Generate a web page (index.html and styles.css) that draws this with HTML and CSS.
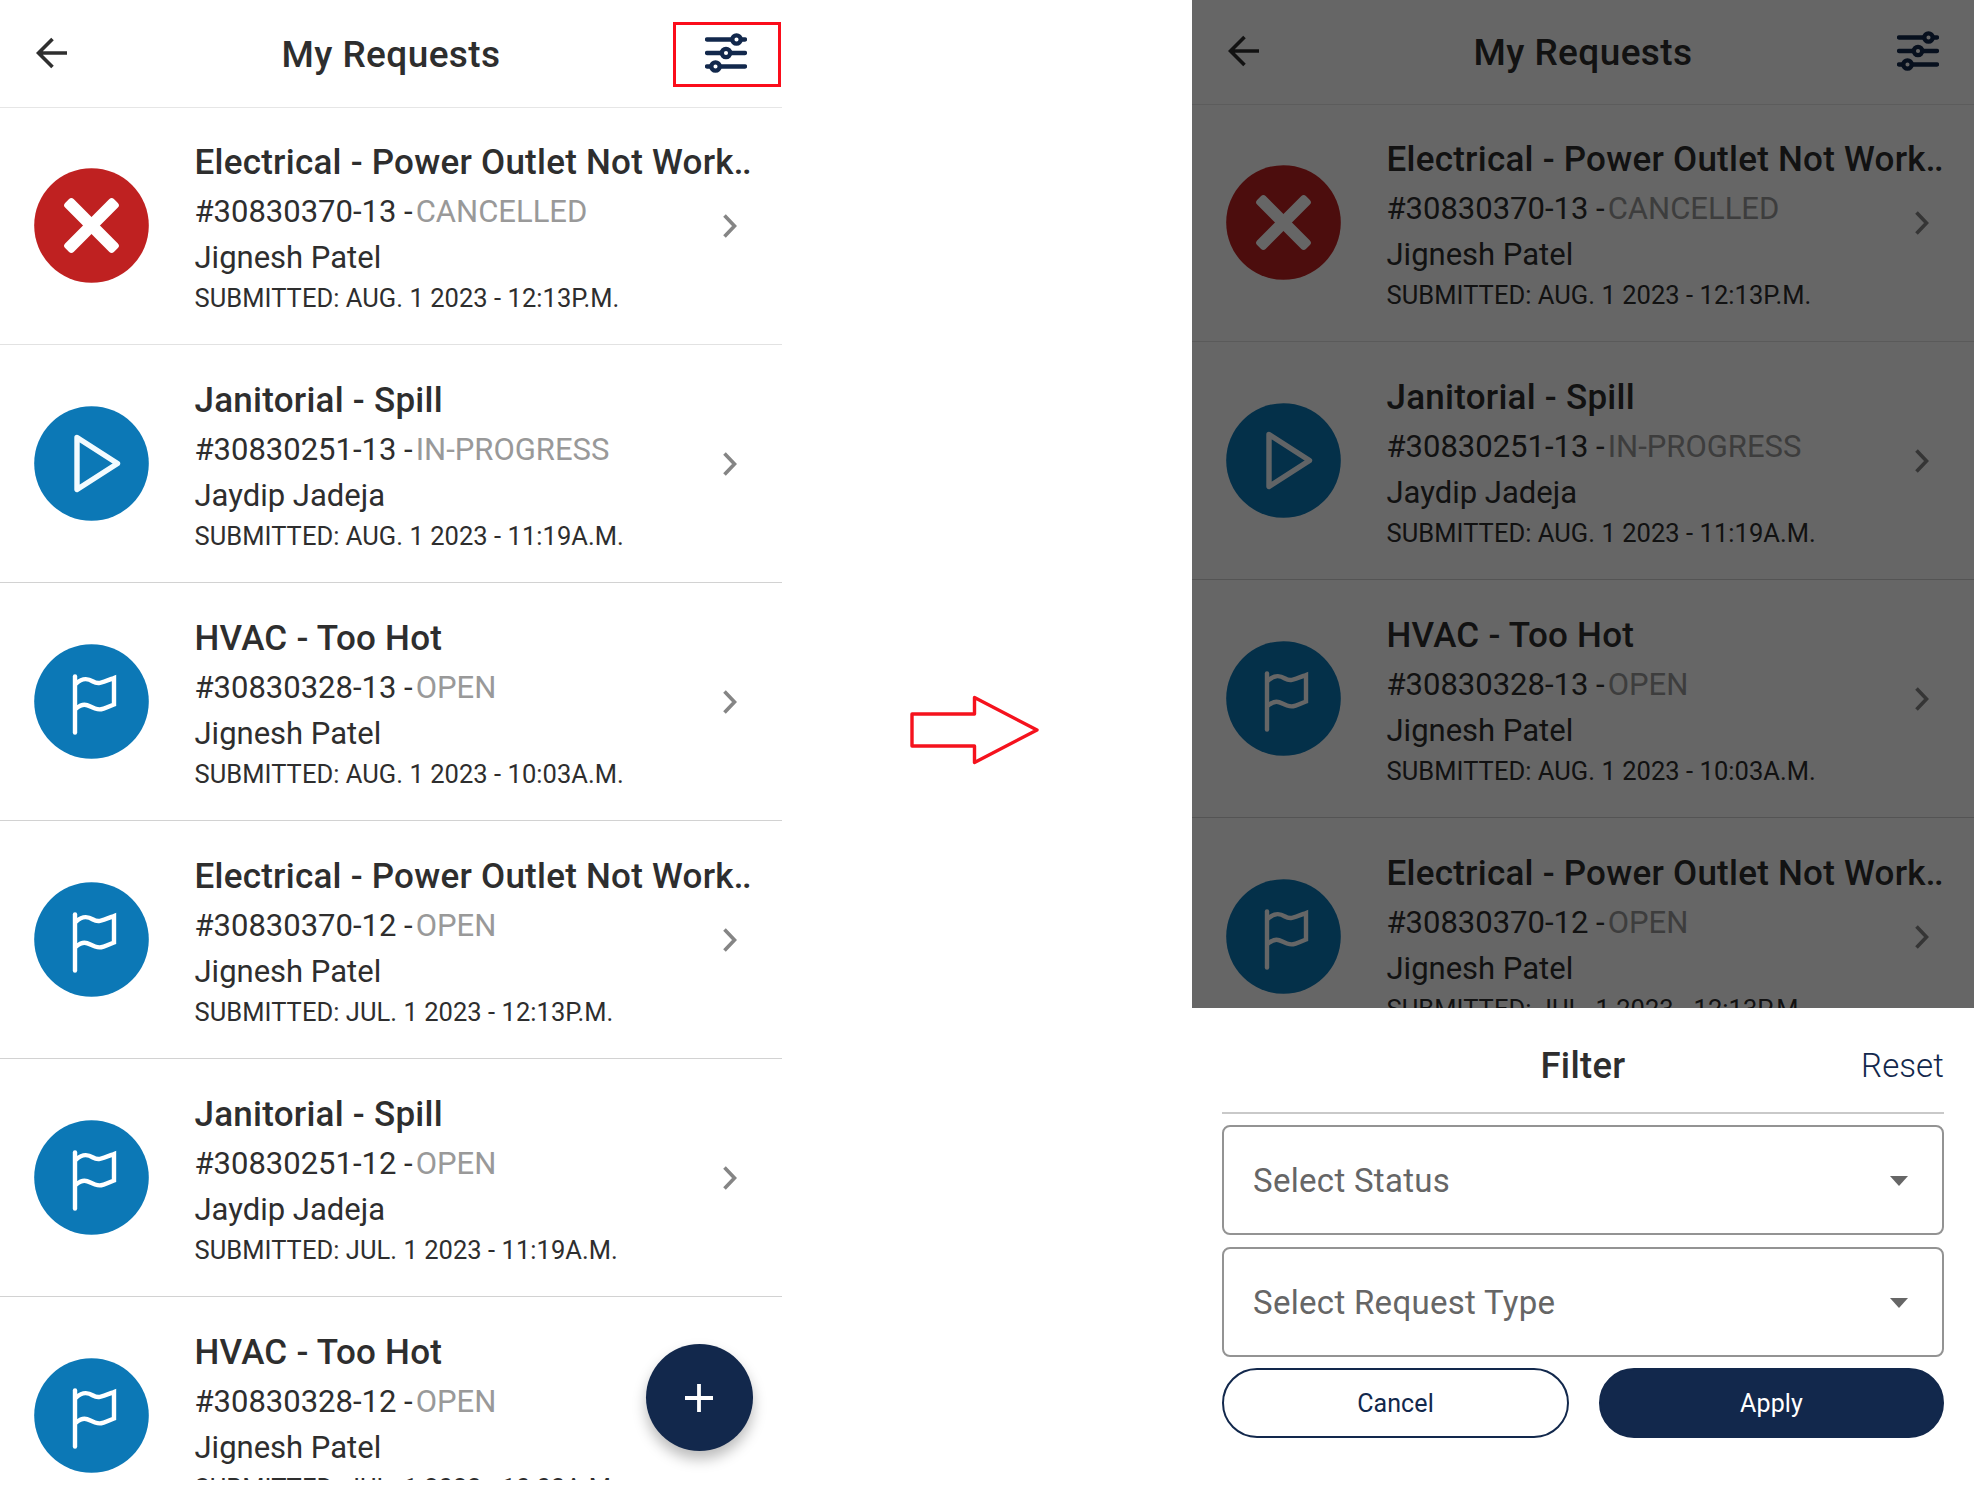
FILE: index.html
```html
<!DOCTYPE html>
<html lang="en">
<head>
<meta charset="utf-8">
<title>My Requests</title>
<link rel="stylesheet" href="styles.css">
</head>
<body>
<svg class="sprite" aria-hidden="true">
  <symbol id="back" viewBox="0 0 32 32"><path d="M31 16H3M16.500 2L2.500 16L16.500 30" fill="none" stroke="#2f2f2f" stroke-width="3.600"/></symbol>
  <symbol id="sliders" viewBox="0 0 42 42">
    <g fill="none" stroke="#12284c" stroke-width="4.300" stroke-linecap="round"><path d="M2 7.500H27M37 7.500H40M2 21H16M26 21H40M2 34.500H6M16 34.500H40"/><circle cx="31.500" cy="7.500" r="4.200"/><circle cx="21" cy="21" r="4.200"/><circle cx="10.500" cy="34.500" r="4.200"/></g>
  </symbol>
  <symbol id="chevron" viewBox="0 0 14 24"><path d="M1.500 1.500L11.500 12L1.500 22.500" fill="none" stroke="#858585" stroke-width="3.600"/></symbol>
  <symbol id="cancelled" viewBox="0 0 115 115"><circle cx="57.500" cy="57.500" r="57.300" fill="#bf2121"/><g fill="#fff" transform="rotate(45 57.500 57.500)"><rect x="23" y="51.500" width="69" height="12" rx="3.200"/><rect x="51.500" y="23" width="12" height="69" rx="3.200"/></g></symbol>
  <symbol id="progress" viewBox="0 0 115 115"><circle cx="57.500" cy="57.500" r="57.300" fill="#0c78b6"/><path d="M43 31.500L83.500 57.500L43 83.500Z" fill="none" stroke="#f3fbff" stroke-width="5.400" stroke-linejoin="round"/></symbol>
  <symbol id="open" viewBox="0 0 115 115"><circle cx="57.500" cy="57.500" r="57.300" fill="#0c78b6"/><g fill="none" stroke="#fff" stroke-width="4.400" stroke-linecap="round"><path d="M41 32.500V88.500"/><path d="M42 39.500C49 33.500 54 34.500 59 37.500S67 39 80 34V60.500C70 64 68 67 61 64.500S51 57.500 42 64.500"/></g></symbol>
</svg>

<main class="board">
  <section class="phone">
    <header class="bar">
      <svg class="back"><use href="#back"/></svg>
      <h1 class="heading">My Requests</h1>
      <div class="filter-button marked"><svg class="sliders"><use href="#sliders"/></svg></div>
    </header>
    <article class="request"><svg class="status"><use href="#cancelled"/></svg><div class="info"><h2 class="title">Electrical - Power Outlet Not Work<span class="dots">..</span></h2><p class="line">#30830370-13 -<span class="state">CANCELLED</span></p><p class="line name">Jignesh Patel</p><p class="date">SUBMITTED: AUG. 1 2023 - 12:13P.M.</p></div><svg class="chevron"><use href="#chevron"/></svg></article>
    <article class="request"><svg class="status"><use href="#progress"/></svg><div class="info"><h2 class="title">Janitorial - Spill</h2><p class="line">#30830251-13 -<span class="state">IN-PROGRESS</span></p><p class="line name">Jaydip Jadeja</p><p class="date">SUBMITTED: AUG. 1 2023 - 11:19A.M.</p></div><svg class="chevron"><use href="#chevron"/></svg></article>
    <article class="request"><svg class="status"><use href="#open"/></svg><div class="info"><h2 class="title">HVAC - Too Hot</h2><p class="line">#30830328-13 -<span class="state">OPEN</span></p><p class="line name">Jignesh Patel</p><p class="date">SUBMITTED: AUG. 1 2023 - 10:03A.M.</p></div><svg class="chevron"><use href="#chevron"/></svg></article>
    <article class="request"><svg class="status"><use href="#open"/></svg><div class="info"><h2 class="title">Electrical - Power Outlet Not Work<span class="dots">..</span></h2><p class="line">#30830370-12 -<span class="state">OPEN</span></p><p class="line name">Jignesh Patel</p><p class="date">SUBMITTED: JUL. 1 2023 - 12:13P.M.</p></div><svg class="chevron"><use href="#chevron"/></svg></article>
    <article class="request"><svg class="status"><use href="#open"/></svg><div class="info"><h2 class="title">Janitorial - Spill</h2><p class="line">#30830251-12 -<span class="state">OPEN</span></p><p class="line name">Jaydip Jadeja</p><p class="date">SUBMITTED: JUL. 1 2023 - 11:19A.M.</p></div><svg class="chevron"><use href="#chevron"/></svg></article>
    <article class="request"><svg class="status"><use href="#open"/></svg><div class="info"><h2 class="title">HVAC - Too Hot</h2><p class="line">#30830328-12 -<span class="state">OPEN</span></p><p class="line name">Jignesh Patel</p><p class="date">SUBMITTED: JUL. 1 2023 - 10:03A.M.</p></div></article>
    <div class="fab"><svg width="30" height="30" viewBox="0 0 30 30"><path d="M1 15H29M15 1V29" stroke="#fff" stroke-width="3.800"/></svg></div>
  </section>

  <div class="between"><svg width="130" height="72" viewBox="0 0 130 72"><path d="M4 20H66.500V3.500L129 36L66.500 68.500V52H4Z" transform="translate(-1 0)" fill="#fff" stroke="#f5121d" stroke-width="3.400" stroke-linejoin="round"/></svg></div>

  <section class="phone with-sheet">
    <div class="behind">
      <header class="bar">
        <svg class="back"><use href="#back"/></svg>
        <h1 class="heading">My Requests</h1>
        <div class="filter-button"><svg class="sliders"><use href="#sliders"/></svg></div>
      </header>
      <article class="request"><svg class="status"><use href="#cancelled"/></svg><div class="info"><h2 class="title">Electrical - Power Outlet Not Work<span class="dots">..</span></h2><p class="line">#30830370-13 -<span class="state">CANCELLED</span></p><p class="line name">Jignesh Patel</p><p class="date">SUBMITTED: AUG. 1 2023 - 12:13P.M.</p></div><svg class="chevron"><use href="#chevron"/></svg></article>
      <article class="request"><svg class="status"><use href="#progress"/></svg><div class="info"><h2 class="title">Janitorial - Spill</h2><p class="line">#30830251-13 -<span class="state">IN-PROGRESS</span></p><p class="line name">Jaydip Jadeja</p><p class="date">SUBMITTED: AUG. 1 2023 - 11:19A.M.</p></div><svg class="chevron"><use href="#chevron"/></svg></article>
      <article class="request"><svg class="status"><use href="#open"/></svg><div class="info"><h2 class="title">HVAC - Too Hot</h2><p class="line">#30830328-13 -<span class="state">OPEN</span></p><p class="line name">Jignesh Patel</p><p class="date">SUBMITTED: AUG. 1 2023 - 10:03A.M.</p></div><svg class="chevron"><use href="#chevron"/></svg></article>
      <article class="request"><svg class="status"><use href="#open"/></svg><div class="info"><h2 class="title">Electrical - Power Outlet Not Work<span class="dots">..</span></h2><p class="line">#30830370-12 -<span class="state">OPEN</span></p><p class="line name">Jignesh Patel</p><p class="date">SUBMITTED: JUL. 1 2023 - 12:13P.M.</p></div><svg class="chevron"><use href="#chevron"/></svg></article>
      <div class="scrim"></div>
    </div>
    <div class="sheet">
      <div class="sheet-head"><h2 class="sheet-title">Filter</h2><span class="reset">Reset</span></div>
      <div class="select"><span>Select Status</span><i class="caret"></i></div>
      <div class="select"><span>Select Request Type</span><i class="caret"></i></div>
      <div class="actions"><button class="button">Cancel</button><button class="button primary">Apply</button></div>
    </div>
  </section>
</main>
</body>
</html>
```
FILE: styles.css
```css
* { box-sizing: border-box; }
body { margin: 0; background: #fff; font-family: Roboto, sans-serif; color: #2e2e2e; }
h1, h2, p { margin: 0; font-weight: 400; }
.sprite { position: absolute; width: 0; height: 0; }
svg { display: block; }
.board { display: flex; width: 1974px; height: 1486px; overflow: hidden; }
.phone { position: relative; flex: none; width: 782px; height: 1480px; overflow: hidden; background: #fff; }

.bar { display: grid; grid-template-columns: 1fr auto 1fr; height: 108px; border-bottom: 1px solid #e6e6e6; }
.back { width: 32px; height: 32px; margin: 37px 0 0 35.5px; }
.heading { padding-top: 31px; font-size: 37px; line-height: 48px; font-weight: 500; letter-spacing: .4px; white-space: nowrap; }
.filter-button { justify-self: end; width: 108px; height: 65px; margin: 22px 1px 0 0; padding: 10px 0 0 32px; }
.marked { padding: 7px 0 0 29px; border: 3px solid #fb0d1b; }
.sliders { width: 42px; height: 42px; }

.request { display: flex; height: 238px; padding-top: 30px; border-bottom: 1px solid #d2d2d2; }
.bar + .request { height: 237px; padding-top: 29px; border-bottom-color: #e2e2e2; }
.status { flex: none; width: 115px; height: 115px; margin: 31px 0 0 34px; }
.info { flex: none; width: 528.5px; margin-left: 45.5px; padding-top: 1px; white-space: nowrap; }
.title { font-size: 35px; line-height: 50px; font-weight: 500; letter-spacing: .25px; }
.dots { letter-spacing: -1.5px; }
.line { font-size: 31px; line-height: 47px; }
.name { line-height: 46px; }
.state { margin-left: 3px; color: #999; }
.date { font-size: 25.5px; line-height: 34px; letter-spacing: .05px; }
.chevron { flex: none; width: 14px; height: 24px; margin-top: 77px; }

.fab { position: absolute; left: 645.5px; top: 1344px; display: flex; align-items: center; justify-content: center; width: 107px; height: 107px; border-radius: 50%; background: #12284c; box-shadow: 0 8px 14px rgba(0, 0, 0, .27); }
.between { flex: none; width: 410px; padding: 694px 0 0 127px; }

.with-sheet { display: flex; flex-direction: column; }
.behind { position: relative; flex: none; height: 1008px; overflow: hidden; }
.behind .bar { height: 105px; }
.behind .back { margin-top: 35px; }
.behind .heading { padding-top: 29px; }
.behind .filter-button { margin-top: 20px; }
.scrim { position: absolute; inset: 0; background: rgba(0, 0, 0, .6); }

.sheet { display: flex; flex-direction: column; flex: 1; padding: 0 30px; background: #fff; }
.sheet-head { display: grid; grid-template-columns: 1fr auto 1fr; height: 106px; margin-bottom: 11px; border-bottom: 2px solid #c9c9c9; }
.sheet-title { grid-column: 2; padding-top: 34px; font-size: 36.5px; line-height: 48px; font-weight: 500; letter-spacing: .3px; }
.reset { justify-self: end; padding-top: 34px; font-size: 33px; line-height: 48px; font-weight: 300; letter-spacing: .1px; color: #12284c; }
.select { display: flex; align-items: center; justify-content: space-between; height: 110px; margin-bottom: 12px; padding: 0 34px 0 29px; border: 2px solid #939393; border-radius: 8px; font-size: 33px; letter-spacing: .3px; color: #666; }
.select + .actions { margin-top: -1px; }
.caret { margin-top: 2px; border: 9px solid transparent; border-top: 10px solid #666; border-bottom: 0; }
.actions { display: grid; grid-template-columns: 347px 345px; justify-content: space-between; height: 70px; }
.button { padding: 2px 0 0; border: 2px solid #12284c; border-radius: 35px; background: #fff; font: 400 25px/48px Roboto, sans-serif; letter-spacing: .1px; color: #12284c; }
.primary { background: #12284c; color: #fff; }
```
